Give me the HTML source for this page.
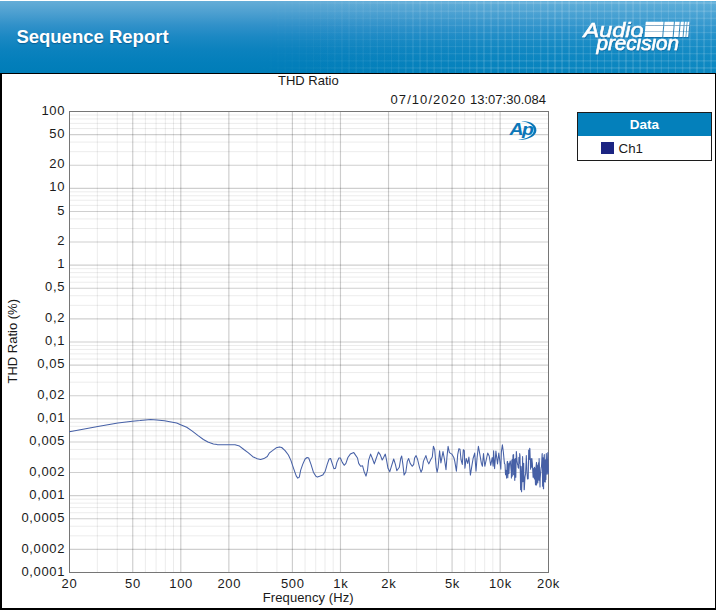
<!DOCTYPE html>
<html lang="en">
<head>
<meta charset="utf-8">
<title>Sequence Report</title>
<style>
html,body{margin:0;padding:0;background:#fff;}
body{width:719px;height:613px;position:relative;overflow:hidden;font-family:"Liberation Sans",sans-serif;}
#hdr{position:absolute;left:0;top:1px;width:716px;height:72px;overflow:hidden;
 background:linear-gradient(to bottom,#65add7 0px,#4c9fd0 12px,#3191c9 24px,#1b88c3 36px,#0c82be 48px,#047fbb 60px,#007db8 72px);}
#hdr .grid{position:absolute;left:0;top:0;width:716px;height:72px;
 background-image:
  repeating-linear-gradient(to right,rgba(255,255,255,0) 0px,rgba(255,255,255,0) 5.2px,rgba(255,255,255,.125) 5.8px,rgba(255,255,255,.125) 6.8px,rgba(255,255,255,0) 7.1px),
  repeating-linear-gradient(to bottom,rgba(255,255,255,0) 0px,rgba(255,255,255,0) 5.2px,rgba(255,255,255,.125) 5.8px,rgba(255,255,255,.125) 6.8px,rgba(255,255,255,0) 7.08px);
 background-position:1.95px 0px, 0px 4.1px;
 -webkit-mask-image:linear-gradient(to right,rgba(0,0,0,0) 255px,rgba(0,0,0,.55) 400px,rgba(0,0,0,1) 520px);
 mask-image:linear-gradient(to right,rgba(0,0,0,0) 255px,rgba(0,0,0,.55) 400px,rgba(0,0,0,1) 520px);}
#hdr .glow{position:absolute;left:0;top:0;width:716px;height:72px;background:linear-gradient(to right,rgba(70,190,235,0) 300px,rgba(70,190,235,.13) 620px,rgba(70,190,235,.16) 716px);}
#hdr h1{position:absolute;left:16.4px;top:24.5px;margin:0;font-size:18.5px;line-height:22px;font-weight:bold;color:#fff;white-space:nowrap;
 text-shadow:0 1px 1px rgba(0,60,110,.55);}
#logo{position:absolute;left:0;top:0;}
#panel{position:absolute;left:0;top:73px;width:716px;height:537px;box-sizing:border-box;background:#fff;
 border-style:solid;border-color:#000;border-width:1px 1px 2px 2px;}
#chart{position:absolute;left:0;top:0;}
.gm{stroke:#000;stroke-opacity:.078;stroke-width:1}
.gd{stroke:#000;stroke-opacity:.19;stroke-width:1.1}
.gj{stroke:#000;stroke-opacity:.2;stroke-width:1.15}
.t{font-family:"Liberation Sans",sans-serif;font-size:13px;fill:#1a1a1a;}
.n{letter-spacing:.65px;}
#legend{position:absolute;left:577px;top:112px;width:135px;height:49px;box-sizing:border-box;border:1px solid #1c1c1c;background:#fff;}
#legend .h{height:23px;background:#0480bb;color:#fff;font-weight:bold;font-size:13.5px;line-height:24.5px;text-align:center;}
#legend .r{position:relative;height:24px;font-size:13px;color:#1a1a1a;}
#legend .sw{position:absolute;left:23px;top:5.5px;width:13px;height:12.7px;background:#1b2482;}
#legend .nm{position:absolute;left:40.6px;top:4.5px;line-height:15px;font-size:13.3px;}
</style>
</head>
<body>
<div id="hdr">
 <div class="glow"></div>
 <div class="grid"></div>
 <h1>Sequence Report</h1>
 <svg id="logo" width="716" height="72" viewBox="0 1 716 72">
  <defs><filter id="ls" x="-5%" y="-10%" width="110%" height="130%"><feDropShadow dx="0.5" dy="0.9" stdDeviation="0.7" flood-color="#004a80" flood-opacity="0.55"/></filter></defs>
  <g filter="url(#ls)">
  <g fill="#fff" font-family="Liberation Sans, sans-serif" font-style="italic" stroke="#fff">
   <text x="583.6" y="37" font-size="20.4" textLength="60" lengthAdjust="spacingAndGlyphs" stroke-width="0.5">Audio</text>
   <text x="596.5" y="50" font-size="20.4" textLength="82.5" lengthAdjust="spacingAndGlyphs" stroke-width="0.6">precision</text>
  </g>
  <g fill="#fff" transform="translate(0,0) skewX(-5) translate(2.3,0)">
   <g id="bars">
<rect x="645.4" y="21.8" width="17.7" height="3.3"/>
<rect x="645.4" y="25.8" width="17.7" height="5.1"/>
<rect x="645.4" y="31.6" width="17.7" height="5.3"/>
<rect x="664.2" y="21.8" width="9.3" height="3.3"/>
<rect x="664.2" y="25.8" width="9.3" height="5.1"/>
<rect x="664.2" y="31.6" width="9.3" height="5.3"/>
<rect x="674.6" y="21.8" width="4.7" height="3.3"/>
<rect x="674.6" y="25.8" width="4.7" height="5.1"/>
<rect x="674.6" y="31.6" width="4.7" height="5.3"/>
<rect x="680.4" y="21.8" width="3.1" height="3.3"/>
<rect x="680.4" y="25.8" width="3.1" height="5.1"/>
<rect x="680.4" y="31.6" width="3.1" height="5.3"/>
<rect x="684.5" y="21.8" width="1.9" height="3.3"/>
<rect x="684.5" y="25.8" width="1.9" height="5.1"/>
<rect x="684.5" y="31.6" width="1.9" height="5.3"/>
<rect x="687.2" y="21.8" width="1.8" height="3.3"/>
<rect x="687.2" y="25.8" width="1.8" height="5.1"/>
<rect x="687.2" y="31.6" width="1.8" height="5.3"/>
   </g>
  </g>
  </g>
 </svg>
</div>
<div id="panel"></div>
<svg id="chart" width="719" height="613" viewBox="0 0 719 613">
 <g>
<line x1="97.32" y1="111.50" x2="97.32" y2="572.50" class="gm"/>
<line x1="117.26" y1="111.50" x2="117.26" y2="572.50" class="gm"/>
<line x1="145.38" y1="111.50" x2="145.38" y2="572.50" class="gm"/>
<line x1="156.07" y1="111.50" x2="156.07" y2="572.50" class="gm"/>
<line x1="165.33" y1="111.50" x2="165.33" y2="572.50" class="gm"/>
<line x1="173.50" y1="111.50" x2="173.50" y2="572.50" class="gm"/>
<line x1="256.98" y1="111.50" x2="256.98" y2="572.50" class="gm"/>
<line x1="276.93" y1="111.50" x2="276.93" y2="572.50" class="gm"/>
<line x1="305.05" y1="111.50" x2="305.05" y2="572.50" class="gm"/>
<line x1="315.74" y1="111.50" x2="315.74" y2="572.50" class="gm"/>
<line x1="325.00" y1="111.50" x2="325.00" y2="572.50" class="gm"/>
<line x1="333.16" y1="111.50" x2="333.16" y2="572.50" class="gm"/>
<line x1="416.65" y1="111.50" x2="416.65" y2="572.50" class="gm"/>
<line x1="436.60" y1="111.50" x2="436.60" y2="572.50" class="gm"/>
<line x1="464.71" y1="111.50" x2="464.71" y2="572.50" class="gm"/>
<line x1="475.40" y1="111.50" x2="475.40" y2="572.50" class="gm"/>
<line x1="484.66" y1="111.50" x2="484.66" y2="572.50" class="gm"/>
<line x1="492.83" y1="111.50" x2="492.83" y2="572.50" class="gm"/>
<line x1="69.50" y1="535.84" x2="548.50" y2="535.84" class="gm"/>
<line x1="69.50" y1="526.24" x2="548.50" y2="526.24" class="gm"/>
<line x1="69.50" y1="512.71" x2="548.50" y2="512.71" class="gm"/>
<line x1="69.50" y1="507.57" x2="548.50" y2="507.57" class="gm"/>
<line x1="69.50" y1="503.11" x2="548.50" y2="503.11" class="gm"/>
<line x1="69.50" y1="499.18" x2="548.50" y2="499.18" class="gm"/>
<line x1="69.50" y1="459.01" x2="548.50" y2="459.01" class="gm"/>
<line x1="69.50" y1="449.41" x2="548.50" y2="449.41" class="gm"/>
<line x1="69.50" y1="435.88" x2="548.50" y2="435.88" class="gm"/>
<line x1="69.50" y1="430.73" x2="548.50" y2="430.73" class="gm"/>
<line x1="69.50" y1="426.28" x2="548.50" y2="426.28" class="gm"/>
<line x1="69.50" y1="422.35" x2="548.50" y2="422.35" class="gm"/>
<line x1="69.50" y1="382.17" x2="548.50" y2="382.17" class="gm"/>
<line x1="69.50" y1="372.58" x2="548.50" y2="372.58" class="gm"/>
<line x1="69.50" y1="359.05" x2="548.50" y2="359.05" class="gm"/>
<line x1="69.50" y1="353.90" x2="548.50" y2="353.90" class="gm"/>
<line x1="69.50" y1="349.45" x2="548.50" y2="349.45" class="gm"/>
<line x1="69.50" y1="345.52" x2="548.50" y2="345.52" class="gm"/>
<line x1="69.50" y1="305.34" x2="548.50" y2="305.34" class="gm"/>
<line x1="69.50" y1="295.74" x2="548.50" y2="295.74" class="gm"/>
<line x1="69.50" y1="282.21" x2="548.50" y2="282.21" class="gm"/>
<line x1="69.50" y1="277.07" x2="548.50" y2="277.07" class="gm"/>
<line x1="69.50" y1="272.61" x2="548.50" y2="272.61" class="gm"/>
<line x1="69.50" y1="268.68" x2="548.50" y2="268.68" class="gm"/>
<line x1="69.50" y1="228.51" x2="548.50" y2="228.51" class="gm"/>
<line x1="69.50" y1="218.91" x2="548.50" y2="218.91" class="gm"/>
<line x1="69.50" y1="205.38" x2="548.50" y2="205.38" class="gm"/>
<line x1="69.50" y1="200.23" x2="548.50" y2="200.23" class="gm"/>
<line x1="69.50" y1="195.78" x2="548.50" y2="195.78" class="gm"/>
<line x1="69.50" y1="191.85" x2="548.50" y2="191.85" class="gm"/>
<line x1="69.50" y1="151.67" x2="548.50" y2="151.67" class="gm"/>
<line x1="69.50" y1="142.08" x2="548.50" y2="142.08" class="gm"/>
<line x1="69.50" y1="128.55" x2="548.50" y2="128.55" class="gm"/>
<line x1="69.50" y1="123.40" x2="548.50" y2="123.40" class="gm"/>
<line x1="69.50" y1="118.95" x2="548.50" y2="118.95" class="gm"/>
<line x1="69.50" y1="115.02" x2="548.50" y2="115.02" class="gm"/>
<line x1="132.74" y1="111.50" x2="132.74" y2="572.50" class="gj"/>
<line x1="180.80" y1="111.50" x2="180.80" y2="572.50" class="gj"/>
<line x1="228.87" y1="111.50" x2="228.87" y2="572.50" class="gj"/>
<line x1="292.40" y1="111.50" x2="292.40" y2="572.50" class="gj"/>
<line x1="340.47" y1="111.50" x2="340.47" y2="572.50" class="gj"/>
<line x1="388.53" y1="111.50" x2="388.53" y2="572.50" class="gj"/>
<line x1="452.07" y1="111.50" x2="452.07" y2="572.50" class="gj"/>
<line x1="500.14" y1="111.50" x2="500.14" y2="572.50" class="gj"/>
<line x1="69.50" y1="549.37" x2="548.50" y2="549.37" class="gd"/>
<line x1="69.50" y1="518.80" x2="548.50" y2="518.80" class="gd"/>
<line x1="69.50" y1="495.67" x2="548.50" y2="495.67" class="gd"/>
<line x1="69.50" y1="472.54" x2="548.50" y2="472.54" class="gd"/>
<line x1="69.50" y1="441.96" x2="548.50" y2="441.96" class="gd"/>
<line x1="69.50" y1="418.83" x2="548.50" y2="418.83" class="gd"/>
<line x1="69.50" y1="395.70" x2="548.50" y2="395.70" class="gd"/>
<line x1="69.50" y1="365.13" x2="548.50" y2="365.13" class="gd"/>
<line x1="69.50" y1="342.00" x2="548.50" y2="342.00" class="gd"/>
<line x1="69.50" y1="318.87" x2="548.50" y2="318.87" class="gd"/>
<line x1="69.50" y1="288.30" x2="548.50" y2="288.30" class="gd"/>
<line x1="69.50" y1="265.17" x2="548.50" y2="265.17" class="gd"/>
<line x1="69.50" y1="242.04" x2="548.50" y2="242.04" class="gd"/>
<line x1="69.50" y1="211.46" x2="548.50" y2="211.46" class="gd"/>
<line x1="69.50" y1="188.33" x2="548.50" y2="188.33" class="gd"/>
<line x1="69.50" y1="165.20" x2="548.50" y2="165.20" class="gd"/>
<line x1="69.50" y1="134.63" x2="548.50" y2="134.63" class="gd"/>
 </g>
 <rect x="69.5" y="111.5" width="479.0" height="461.0" fill="none" stroke="#767676" stroke-width="1" shape-rendering="crispEdges"/>
 <polyline points="69.4,431.7 83.0,429.2 97.8,426.4 117.9,423.1 132.3,421.2 140.0,420.6 145.6,419.9 150.6,419.6 156.7,420.0 164.5,420.8 171.1,422.0 176.7,423.1 180.6,424.7 186.7,427.2 192.3,431.1 197.8,435.4 203.4,439.5 207.9,442.0 213.4,443.9 217.2,444.6 228.3,444.7 235.0,444.8 239.5,446.1 243.9,449.5 248.4,452.8 252.8,456.7 257.3,458.7 260.6,459.5 263.9,458.6 267.3,456.5 269.5,452.8 272.8,450.4 276.2,447.8 279.5,446.9 281.7,447.5 285.1,450.6 288.4,455.0 290.9,460.4 293.9,469.3 296.3,476.1 297.8,478.1 299.3,477.1 300.7,470.2 302.7,464.4 305.1,459.0 307.1,457.5 308.7,458.0 311.0,464.4 313.4,472.2 315.9,476.3 317.4,477.1 320.3,476.1 322.7,475.1 325.2,471.2 327.2,464.4 329.1,459.0 330.6,458.5 332.5,464.4 334.0,468.8 335.5,468.3 336.9,462.4 338.9,458.0 340.4,458.0 342.3,462.4 344.2,465.3 345.9,463.4 347.9,457.5 350.3,454.1 353.8,452.6 355.2,454.6 357.5,458.0 358.7,463.4 360.6,466.3 362.6,465.8 364.0,471.2 366.0,476.1 367.5,470.2 368.6,460.4 370.6,454.1 372.4,458.5 374.3,463.9 375.8,459.5 378.4,452.1 380.2,454.6 382.2,460.0 383.6,457.5 385.3,454.1 386.6,460.4 388.0,468.3 389.8,471.7 391.4,466.3 393.7,459.0 395.4,464.4 396.8,470.7 399.3,467.3 400.7,458.5 401.7,456.0 402.9,464.4 404.1,475.1 405.8,472.2 407.3,461.4 408.6,458.5 410.2,463.4 412.2,466.3 413.7,464.4 414.6,458.0 416.1,455.6 417.6,459.5 419.5,467.3 421.0,472.2 422.3,469.3 423.4,461.4 425.9,455.6 427.4,460.9 428.8,463.9 430.8,459.5 432.3,457.0 433.4,446.3 434.7,449.7 436.2,467.3 437.1,472.2 438.1,467.3 439.6,450.7 440.9,462.9 443.0,451.6 444.5,459.5 446.0,469.7 446.9,457.5 448.1,446.3 449.4,452.6 451.8,454.1 453.8,457.5 454.8,461.4 456.4,471.2 457.7,454.6 458.9,448.7 460.0,449.2 461.0,459.5 462.3,464.4 463.3,449.7 464.3,450.7 464.9,468.3 466.2,458.5 467.7,463.4 468.9,457.0 470.4,475.1 472.1,464.4 473.1,458.5 474.7,453.1 476.0,471.2 477.0,458.5 478.4,446.3 479.9,454.6 481.4,463.4 482.4,466.3 483.5,453.6 484.8,466.3 486.3,459.5 487.7,453.1 489.2,456.0 490.7,465.3 492.2,457.5 493.1,466.3 493.6,450.7 494.6,468.8 495.9,451.1 497.5,463.9 498.8,453.1 500.0,462.4 500.8,469.3 501.4,451.6 502.4,444.8 503.4,452.6 504.4,463.4 505.0,464.2 505.5,474.8 505.9,470.2 506.0,471.7 506.6,477.8 506.6,478.1 507.2,461.6 507.6,461.4 507.8,477.7 508.3,463.2 508.9,473.7 508.9,473.7 509.5,463.7 510.2,460.9 510.3,460.9 510.8,466.8 511.3,472.5 511.4,478.1 511.8,460.4 512.3,459.5 512.3,476.1 513.0,454.9 513.6,454.6 513.6,474.7 514.2,459.6 514.7,480.0 514.8,480.5 515.2,458.5 515.8,477.3 516.3,451.6 516.4,451.6 517.0,460.8 517.6,464.7 517.7,464.4 518.2,467.6 518.7,468.3 518.9,457.4 519.5,463.3 519.7,453.6 520.0,455.5 520.6,489.8 520.7,466.3 521.2,466.6 521.6,491.8 521.9,482.4 522.5,467.3 522.6,456.5 523.0,481.7 523.7,463.3 524.1,489.8 524.3,489.8 525.0,476.8 525.5,474.2 525.6,473.8 526.2,459.8 526.3,455.6 527.0,472.3 527.5,479.0 527.7,479.0 528.2,478.8 528.7,450.0 529.0,459.5 529.3,459.3 529.7,448.2 529.9,449.2 530.5,466.4 530.6,469.3 531.1,458.8 531.7,467.2 531.9,458.5 532.4,463.8 533.1,477.1 533.4,477.1 533.7,468.5 534.4,479.0 534.4,467.3 534.9,468.4 535.4,483.1 535.5,484.9 536.0,467.0 536.5,462.4 536.6,484.9 537.2,465.1 537.8,483.0 537.8,483.0 538.4,462.9 539.0,480.2 539.1,458.5 539.5,467.4 540.0,486.9 540.2,478.2 540.9,470.0 541.2,467.3 541.5,466.8 542.1,453.9 542.2,453.6 542.6,486.2 543.1,457.8 543.4,488.8 543.6,488.8 544.1,455.8 544.3,454.6 544.7,481.8 545.3,482.0 545.4,459.7 545.9,479.5 546.3,453.6 546.4,457.2 547.0,467.8 547.1,474.2 547.7,456.1 547.9,452.6 548.3,473.6 548.3,464.4" fill="none" stroke="#4660a6" stroke-width="1.05" stroke-linejoin="round" stroke-linecap="round"/>
<text x="65.1" y="114.6" text-anchor="end" class="t n">100</text>
<text x="65.1" y="137.7" text-anchor="end" class="t n">50</text>
<text x="65.1" y="168.3" text-anchor="end" class="t n">20</text>
<text x="65.1" y="191.4" text-anchor="end" class="t n">10</text>
<text x="65.1" y="214.6" text-anchor="end" class="t n">5</text>
<text x="65.1" y="245.1" text-anchor="end" class="t n">2</text>
<text x="65.1" y="268.3" text-anchor="end" class="t n">1</text>
<text x="65.1" y="291.4" text-anchor="end" class="t n">0,5</text>
<text x="65.1" y="322.0" text-anchor="end" class="t n">0,2</text>
<text x="65.1" y="345.1" text-anchor="end" class="t n">0,1</text>
<text x="65.1" y="368.2" text-anchor="end" class="t n">0,05</text>
<text x="65.1" y="398.8" text-anchor="end" class="t n">0,02</text>
<text x="65.1" y="421.9" text-anchor="end" class="t n">0,01</text>
<text x="65.1" y="445.1" text-anchor="end" class="t n">0,005</text>
<text x="65.1" y="475.6" text-anchor="end" class="t n">0,002</text>
<text x="65.1" y="498.8" text-anchor="end" class="t n">0,001</text>
<text x="65.1" y="521.9" text-anchor="end" class="t n">0,0005</text>
<text x="65.1" y="552.5" text-anchor="end" class="t n">0,0002</text>
<text x="65.1" y="575.6" text-anchor="end" class="t n">0,0001</text>
<text x="69.5" y="587.8" text-anchor="middle" class="t n">20</text>
<text x="133.0" y="587.8" text-anchor="middle" class="t n">50</text>
<text x="181.1" y="587.8" text-anchor="middle" class="t n">100</text>
<text x="229.2" y="587.8" text-anchor="middle" class="t n">200</text>
<text x="292.7" y="587.8" text-anchor="middle" class="t n">500</text>
<text x="340.8" y="587.8" text-anchor="middle" class="t n">1k</text>
<text x="388.8" y="587.8" text-anchor="middle" class="t n">2k</text>
<text x="452.4" y="587.8" text-anchor="middle" class="t n">5k</text>
<text x="500.4" y="587.8" text-anchor="middle" class="t n">10k</text>
<text x="548.5" y="587.8" text-anchor="middle" class="t n">20k</text>
 <text x="308.3" y="85.2" text-anchor="middle" class="t">THD Ratio</text>
 <text y="104" class="t"><tspan x="390.6" letter-spacing="1.05">07/10/2020 </tspan><tspan x="469.9" letter-spacing="0.02">13:07:30.084</tspan></text>
 <text x="308.3" y="602.2" text-anchor="middle" class="t" letter-spacing="0.1">Frequency (Hz)</text>
 <text transform="translate(17.0,341.3) rotate(-90)" text-anchor="middle" class="t">THD Ratio (%)</text>
 <g id="ap">
  <text x="509.6" y="135" font-family="Liberation Sans, sans-serif" font-style="italic" font-weight="bold" font-size="16" fill="#0a76b8" letter-spacing="-1.4" textLength="22.5" lengthAdjust="spacingAndGlyphs">Ap</text>
  <path d="M521.2 121.4 C530 120.2 536.6 124.6 536.4 130.4 C536.2 136.6 526.6 140.4 517.4 139.6 C526.2 139 533.6 135.6 533.8 130.4 C534 125.4 528.6 121.8 521.2 121.4 Z" fill="#0a76b8"/>
 </g>
</svg>
<div id="legend">
 <div class="h">Data</div>
 <div class="r"><span class="sw"></span><span class="nm">Ch1</span></div>
</div>
</body>
</html>
